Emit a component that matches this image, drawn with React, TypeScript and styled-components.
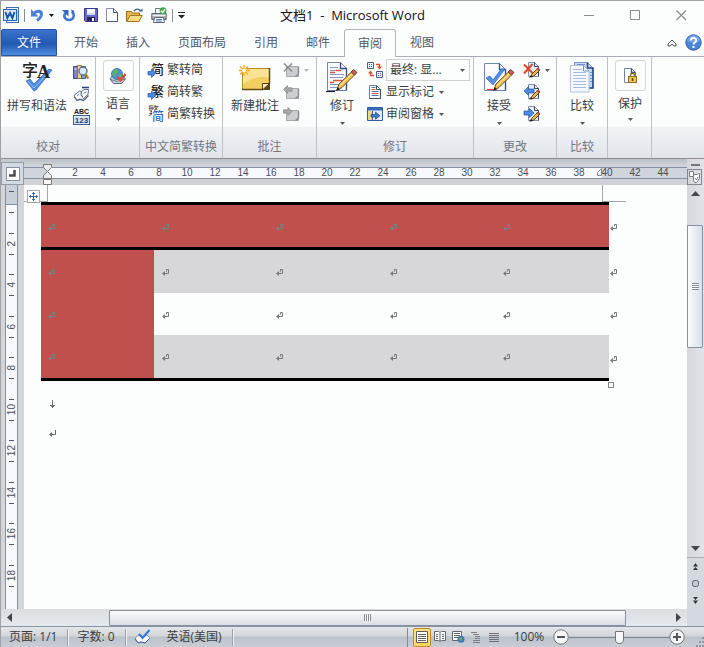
import React from "react";
import styled, { createGlobalStyle, css } from "styled-components";

const GlobalStyle = createGlobalStyle`
  *, *::before, *::after { box-sizing: border-box; }
  body { margin: 0; background: #fcfdfd; }
  body, button, select, input {
    font-family: "Open Sans", "Noto Sans CJK SC", sans-serif;
    font-size: 12px;
    line-height: 16px;
    color: #3a3d42;
  }
  button { margin: 0; padding: 0; border: 0; background: none; cursor: pointer; }
  svg { display: block; flex: none; overflow: visible; }
`;

/* ---------- icons ---------- */

const WordLogo = () => (
  <svg width="16" height="16" viewBox="0 0 16 16">
    <rect x="3.500" y=".5" width="12" height="15" fill="#f4f8fd" stroke="#3b6fb4" />
    <path d="M13 4h2M13 6h2M13 8h2M13 10h2M13 12h2" stroke="#7ea6d8" />
    <rect x=".5" y="2.500" width="13" height="11" fill="#d8e8f8" stroke="#2c62ac" />
    <path d="M2.500 5l1.900 6L7 6l2.400 5 2.100-6" fill="none" stroke="#1b55a5" strokeWidth="2" />
  </svg>
);
const UndoIcon = () => (
  <svg width="14" height="14" viewBox="0 0 14 14">
    <path d="M4 5.500C7 1.500 12.300 3 11.300 7.500 10.800 9.500 9 11.300 7 12.500" fill="none" stroke="#4a80d2" strokeWidth="3" />
    <path d="M1 1v7.500h7.500z" fill="#4b82d6" />
  </svg>
);
const RedoIcon = () => (
  <svg width="14" height="14" viewBox="0 0 14 14">
    <path d="M3.500 5C.5 9 4 12 7 12c4.500 0 6.300-5 3-8.500" fill="none" stroke="#3f78ce" strokeWidth="2.600" />
    <path d="M0 2h6.500v6.500z" fill="#3468bd" />
    <path d="M9 1.500l3.500 1.500-2 2.500z" fill="#3468bd" />
  </svg>
);
const SaveIcon = () => (
  <svg width="14" height="14" viewBox="0 0 14 14">
    <path d="M.5.5h13v13h-12l-1-1z" fill="#6968c8" stroke="#37358e" />
    <rect x="3" y="1" width="8" height="6" fill="#f4f6fd" />
    <path d="M3 6h8" stroke="#b7bee8" />
    <rect x="3" y="9" width="8" height="4" fill="#28264f" />
    <rect x="8" y="10" width="2" height="3" fill="#fff" />
  </svg>
);
const NewDocIcon = () => (
  <svg width="12" height="14" viewBox="0 0 12 14">
    <path d="M.5.500h7l4 4v9H.500z" fill="#fcfdff" stroke="#8592a7" />
    <path d="M7.500.500v4h4v9H.500" fill="none" stroke="#49597a" />
  </svg>
);
const OpenIcon = () => (
  <svg width="17" height="14" viewBox="0 0 17 14">
    <path d="M.5 13V3.500h5l1 1.500h7v8z" fill="#e8b64a" stroke="#9b6b18" />
    <path d="M.8 13.500 4 7.500h12.300l-3.300 6z" fill="#fbdc80" stroke="#a87620" />
    <path d="M8 3c2-2.500 5-2.500 6.500 0" fill="none" stroke="#3f628e" strokeWidth="1.300" />
    <path d="M12.500 3.500h4v-3z" fill="#3f628e" />
  </svg>
);
const PrintIcon = () => (
  <svg width="16" height="16" viewBox="0 0 16 16">
    <path d="M4.500 6V1.500h7V6" fill="#fff" stroke="#6f7988" />
    <path d="M.8 6.500h14.400v6H.8z" fill="#a4a9b2" stroke="#5f6670" />
    <path d="M1.500 8.500h13" stroke="#f1f3f6" strokeWidth="1.500" />
    <path d="M3.500 10.500h9l1 5h-11z" fill="#fff" stroke="#596170" />
    <path d="M5 12.500h6M5 14h6" stroke="#4f80c0" />
    <circle cx="12" cy="3.800" r="3.500" fill="#4fa851" />
    <path d="M10 3.800l1.500 1.700L14 2.300" fill="none" stroke="#fff" strokeWidth="1.300" />
  </svg>
);
const CustomizeIcon = () => (
  <svg width="8" height="8" viewBox="0 0 8 8">
    <path d="M0 1.500h7" stroke="#222" />
    <path d="M0 4h7L3.500 7.500z" fill="#222" />
  </svg>
);
const Caret = ({ color = "#555a61" }: { color?: string }) => (
  <svg width="5" height="3" viewBox="0 0 5 3"><path d="M0 0h5L2.500 3z" fill={color} /></svg>
);
const MinimizeIcon = () => (
  <svg width="11" height="11" viewBox="0 0 11 11"><path d="M0 5.500h10" stroke="#8b8b8b" /></svg>
);
const MaximizeIcon = () => (
  <svg width="11" height="11" viewBox="0 0 11 11"><path d="M.5.500h9v9h-9z" fill="none" stroke="#8b8b8b" /></svg>
);
const CloseIcon = () => (
  <svg width="11" height="11" viewBox="0 0 11 11"><path d="M.5.500l9.500 9.500M10 .5L.5 10" stroke="#8b8b8b" strokeWidth="1.200" /></svg>
);
const CollapseIcon = () => (
  <svg width="10" height="8" viewBox="0 0 10 8">
    <path d="M5 1L9 5v2H7L5 5.200 3 7H1V5z" fill="#fff" stroke="#4f535a" />
  </svg>
);
const HelpIcon = () => (
  <svg width="17" height="17" viewBox="0 0 17 17">
    <circle cx="8.500" cy="8.500" r="7.700" fill="#4b86d6" stroke="#2a5fae" />
    <path d="M2 7a6.500 6 0 0 1 13 0c-4 2-9 2-13 0z" fill="#86b2ea" opacity=".6" />
    <path d="M5.800 6.500c0-3.600 5.600-3.400 5.400 0C11.200 8.300 8.500 8.400 8.500 10.600" fill="none" stroke="#fff" strokeWidth="2" />
    <rect x="7.500" y="12" width="2" height="2" fill="#fff" />
  </svg>
);
const SpellingIcon = () => (
  <svg width="32" height="32" viewBox="0 0 32 32">
    <path d="M5 19l4-2 4 5L28 7l3 1-16 20-2 1z" fill="#4f8be0" stroke="#2f63b8" strokeWidth=".7" />
    <path d="M7 19l6 7L27 11" fill="none" stroke="#9cc2f4" />
    <text x="1" y="14" fontSize="16" fontWeight="500" fontFamily='"Noto Sans CJK SC"' fill="#222">字</text>
    <text x="16" y="16" fontSize="18" fontWeight="700" fontFamily='"Liberation Serif"' fill="#222">A</text>
  </svg>
);
const ResearchIcon = () => (
  <svg width="16" height="16" viewBox="0 0 16 16">
    <path d="M.5 2.500h4v12h-4z" fill="#8583c6" stroke="#45438b" />
    <path d="M4.500 1.500h4v13h-4z" fill="#e9d37c" stroke="#8f7631" />
    <path d="M8.500 2.500h4v12h-4z" fill="#7fa3d6" stroke="#3a5b8c" />
    <path d="M1.500 5h2M5.500 4h2M9.500 5h2" stroke="#fff" />
    <circle cx="10" cy="7" r="4" fill="#d7ecfb" stroke="#5c6b80" strokeWidth="1.300" />
    <path d="M12.500 10l2.700 4.500" stroke="#b47a25" strokeWidth="2.400" />
  </svg>
);
const ThesaurusIcon = () => (
  <svg width="16" height="16" viewBox="0 0 16 16">
    <path d="M1 9.500L6.500 5l2 .5L11 3.500h4.500L15 8.500 9.500 13.500l-3-.5L4 14.500z" fill="#fff" stroke="#5e6c83" />
    <path d="M8.500 5.500l-.5 3 2 3M1 10.500l3 4 3-1 3.500 1L15.500 9.500" fill="none" stroke="#5e6c83" strokeWidth="1.200" />
    <path d="M9 1.500h7" stroke="#2c4488" strokeWidth="1.600" />
    <path d="M10.500 7l3-1M4 10l2.500-2" stroke="#5b86c9" />
  </svg>
);
const WordCountIcon = () => (
  <svg width="17" height="17" viewBox="0 0 17 17">
    <text x="8.500" y="6" textAnchor="middle" fontSize="7" fontWeight="700" fontFamily='"Liberation Sans"' fill="#222">ABC</text>
    <rect x=".5" y="7.500" width="16" height="9" fill="#d9e6f8" stroke="#44608f" />
    <text x="8.500" y="15" textAnchor="middle" fontSize="8" fontWeight="700" fontFamily='"Liberation Sans"' fill="#23406f">123</text>
  </svg>
);
const LanguageIcon = () => (
  <svg width="18" height="18" viewBox="0 0 18 18">
    <path d="M1 12l3-4h9l3.500 4-4 4.500h-8z" fill="#cfd6e0" stroke="#56657d" />
    <path d="M1.500 12.500L8 14.500l8-2.500" fill="none" stroke="#69788f" />
    <circle cx="8" cy="7" r="5.500" fill="#4d8ed8" stroke="#366aa8" strokeWidth=".8" />
    <path d="M4 3.500L7.500 2l2 2-2 2.500-2 3-2.500-2zM10 8l3-2v3l-2.500 2.500z" fill="#5cb462" />
    <path d="M8.500 10l3 3.500L16.500 7" fill="none" stroke="#e04a28" strokeWidth="2.200" />
  </svg>
);
const BlueArrow = () => <path d="M0 9.500h3.500V7L8 11.200l-4.500 4.300V13H0z" fill="#4d8ae4" stroke="#2559ac" strokeWidth=".7" />;
const ConvertIcon = ({ glyph }: { glyph: string }) => (
  <svg width="16" height="16" viewBox="0 0 16 16">
    <text x="3" y="12" fontSize="13" fontWeight="500" fontFamily='"Noto Sans CJK SC"' fill="#222">{glyph}</text>
    <BlueArrow />
  </svg>
);
const ConvertBothIcon = () => (
  <svg width="16" height="16" viewBox="0 0 16 16">
    <text x="0" y="9" fontSize="11" fontFamily='"Noto Sans CJK SC"' fill="#444">繁</text>
    <rect x="4" y="4" width="12" height="12" fill="#fcfdfd" />
    <text x="4" y="15" fontSize="12" fontWeight="500" fontFamily='"Noto Sans CJK SC"' fill="#2d66bd">简</text>
  </svg>
);
const NewCommentIcon = () => (
  <svg width="32" height="32" viewBox="0 0 32 32">
    <path d="M3.500 6.500h27v21h-27z" fill="#f2cf62" stroke="#b08a2e" />
    <path d="M4 7h26v9C20 13 12 17 4 22z" fill="#f9e396" />
    <path d="M30.500 6v15l-7 6.500H3" fill="none" stroke="#5f4b17" strokeWidth="1.500" />
    <path d="M23.500 28v-6.500h7z" fill="#fbf0b7" stroke="#4b3c17" />
    <path d="M24 28l7-6.500V28z" fill="#574717" />
    <path d="M5 3v11M0 8.500h11M1 4.500l8 8M9 4.500l-8 8" stroke="#f3a91f" strokeWidth="1.300" />
    <circle cx="5" cy="8.500" r="2" fill="#fffce0" />
  </svg>
);
const GrayNoteIcon = ({ kind }: { kind: "delete" | "prev" | "next" }) => (
  <svg width="16" height="16" viewBox="0 0 16 16">
    <path d="M3.500 4.500h12v10h-12z" fill="#cccdd1" stroke="#a6a8ac" />
    <path d="M15.500 5v7l-3 2.500" fill="none" stroke="#85888d" strokeWidth="1.300" />
    {kind === "delete" && <path d="M1 1.500l8 8M9 1.500l-8 8" stroke="#8d9096" strokeWidth="1.700" />}
    {kind === "prev" && <path d="M.5 5.500l4-4v2.300h4.500v3.400H4.500v2.300z" fill="#a5a7ab" stroke="#85888d" strokeWidth=".7" />}
    {kind === "next" && <path d="M9 5.500l-4-4v2.300H.5v3.400H5v2.300z" fill="#a5a7ab" stroke="#85888d" strokeWidth=".7" />}
  </svg>
);
const Pencil = () => (
  <>
    <path d="M11 28l2-6L26 9.500l3 3L16 25.500z" fill="#f1bf55" stroke="#6e4a1b" />
    <path d="M14 23.500L27 11" stroke="#fff0ac" />
    <path d="M25 10l2.500-2.500 3.500 3-2.500 2.500z" fill="#c95c55" stroke="#743c35" />
    <path d="M10 29l1.500-4 2.500 2.500z" fill="#222" />
  </>
);
const TrackIcon = () => (
  <svg width="32" height="32" viewBox="0 0 32 32">
    <path d="M1.500.5h13l6 6v22h-19z" fill="#fbfcff" stroke="#7187ae" />
    <path d="M14.500.5v6h6v22" fill="none" stroke="#334d7d" strokeWidth="1.300" />
    <path d="M4 5.500h8M4 8.500h8M4 12.500h14M4 15.500h13M4 22.500h9M4 25.500h8" stroke="#8399bf" />
    <path d="M10 8.500h5M4 10.500h5M7 18.500h9M4 20.500h4" stroke="#df5138" strokeWidth="1.500" />
    <Pencil />
    <path d="M0 29.500h9" stroke="#222" strokeWidth="1.200" />
  </svg>
);
const DisplayReviewIcon = () => (
  <svg width="16" height="16" viewBox="0 0 16 16">
    <path d="M.5.500h6v6h-6zM9.500 9.500h6v6h-6z" fill="#edf3fb" stroke="#4d5c7b" />
    <path d="M2 2.500h1M4 2.500h1M2 4.500h1M4 4.500h1M11 11.500h1M13 11.500h1M11 13.500h1M13 13.500h1" stroke="#365e9f" />
    <path d="M9 2.500h3.500V5M7 13.500H3.500V11" fill="none" stroke="#df4f2b" strokeWidth="1.300" />
    <path d="M10 4.500h5l-2.500 3zM1 11.500h5L3.500 8.500z" fill="#df4f2b" />
  </svg>
);
const ShowMarkupIcon = () => (
  <svg width="16" height="16" viewBox="0 0 16 16">
    <path d="M2.500 1.500h7l4 4v9h-11z" fill="#fbfcff" stroke="#6e7e99" />
    <path d="M9.500 1.500v4h4v9h-11" fill="none" stroke="#3d4c69" />
    <path d="M4.500 5.500h4M4.500 9.500h7" stroke="#df5138" />
    <path d="M4.500 3.500h4M4.500 7.500h7M4.500 11.500h7" stroke="#5476af" />
  </svg>
);
const ReviewPaneIcon = () => (
  <svg width="16" height="16" viewBox="0 0 16 16">
    <path d="M.5 1.500h15v13H.500z" fill="#e4edf9" stroke="#345f9f" />
    <path d="M1 3h14" stroke="#366db9" strokeWidth="3" />
    <path d="M1 5h4v9H1z" fill="#ead891" />
    <path d="M5.500 5v9" stroke="#405f8e" />
    <path d="M4 8.500h4.500V6L13 9.700 8.500 13.300V11H4z" fill="#3f7bd3" stroke="#1e4b8e" strokeWidth=".7" />
  </svg>
);
const AcceptIcon = () => (
  <svg width="32" height="32" viewBox="0 0 32 32">
    <path d="M1.500 1.500h15l6 6v21h-21z" fill="#fbfcff" stroke="#7187ae" />
    <path d="M16.500 1.500v6h6v21" fill="none" stroke="#334d7d" strokeWidth="1.300" />
    <path d="M3 16l4-2 3 4L18 7h4L10 23z" fill="#568fe4" stroke="#3165bd" strokeWidth=".7" />
    <Pencil />
    <path d="M4 27.500h7" stroke="#db4938" strokeWidth="1.200" />
  </svg>
);
const ChangeIcon = ({ kind }: { kind: "reject" | "prev" | "next" }) => (
  <svg width="16" height="16" viewBox="0 0 16 16">
    <path d="M4.500.500h6l4 4v10h-10z" fill="#e9eff9" stroke="#8292ae" />
    <path d="M10.500.500v4h4v10" fill="none" stroke="#304567" />
    <path d="M7 15l1-3 6-6 2 2-6 6z" fill="#edb849" stroke="#4e391d" strokeWidth=".9" />
    <path d="M12.500 6.500l2-1 1.500 2-1.500 1.500z" fill="#b34a45" />
    <path d="M5 15.500l4-.500-2-2z" fill="#222" />
    {kind === "reject" && <path d="M0 2.500L8.500 11M8.500 2L0 11.500" stroke="#e44325" strokeWidth="2" />}
    {kind === "prev" && <path d="M0 7l4.500-4.500V5H10v4H4.500v2.500z" fill="#4d8ae4" stroke="#2253a3" strokeWidth=".7" />}
    {kind === "next" && <path d="M10 7L5.500 2.500V5H0v4h5.500v2.500z" fill="#4d8ae4" stroke="#2253a3" strokeWidth=".7" />}
  </svg>
);
const CompareIcon = () => (
  <svg width="26" height="32" viewBox="0 0 26 32">
    <path d="M5.500.5h13l5.500 5.500v20H5.500z" fill="#c6d9f2" stroke="#7a97c2" />
    <path d="M18.500.5v5.500h5.500v20h-4" fill="none" stroke="#294d84" strokeWidth="1.600" />
    <path d="M1.500 3.500h13l5.500 5.500v21H1.500z" fill="#f5f9ff" stroke="#b3c3dc" />
    <path d="M14.500 3.500v5.500h5.500" fill="none" stroke="#7590b8" />
    <path d="M4 7.500h9M4 10.500h13M4 13.500h13M4 16.500h13M4 19.500h13M4 22.500h13M4 25.500h13" stroke="#a5bfe4" />
    <path d="M8 2.500h8M21 10.500h2M21 13.500h2M21 16.500h2M21 19.500h2" stroke="#6f95cc" />
  </svg>
);
const ProtectIcon = () => (
  <svg width="16" height="18" viewBox="0 0 16 18">
    <path d="M2.500 1.500h7l4 4v10h-11z" fill="#fafcff" stroke="#7286a5" />
    <path d="M9.500 1.500v4h4" fill="none" stroke="#344c75" strokeWidth="1.300" />
    <path d="M8.500 10V8.500c0-3 4-3 4 0V10" fill="none" stroke="#8e7129" strokeWidth="1.300" />
    <rect x="6.500" y="9.500" width="8" height="6" fill="#efc65a" stroke="#916b20" />
    <path d="M10.500 11v3" stroke="#5b4315" strokeWidth="1.500" />
  </svg>
);
const ReturnMark = ({ color = "#77777c" }: { color?: string }) => (
  <svg width="7" height="7" viewBox="0 0 7 7">
    <path d="M3 4.500h3.500v-4h-2v2" fill="none" stroke={color} />
    <path d="M0 4.500L3 2v5z" fill={color} />
  </svg>
);
const ParagraphMark = () => (
  <svg width="7" height="7" viewBox="0 0 7 7">
    <path d="M6.500 0v4.500H2" fill="none" stroke="#66666c" />
    <path d="M0 4.500L3 2v5z" fill="#66666c" />
  </svg>
);
const LineBreakMark = () => (
  <svg width="7" height="9" viewBox="0 0 7 9">
    <path d="M3.500 0v8M1 5.500h5M2 6.500h3" fill="none" stroke="#66707a" />
  </svg>
);
const MoveIcon = () => (
  <svg width="9" height="9" viewBox="0 0 9 9">
    <path d="M4.500 0v9M0 4.500h9M3 1.500h3M3 7.500h3M1.500 3v3M7.500 3v3" stroke="#3a68b5" />
  </svg>
);
const IndentMarker = () => (
  <svg width="9" height="21" viewBox="0 0 9 21">
    <path d="M.5.500h8v3l-4 4-4-4zM.5 14.500v-3l4-4 4 4v3z" fill="#ececef" stroke="#77797e" />
    <path d="M.5 15.500h8v5h-8z" fill="#f8f8fa" stroke="#77797e" />
  </svg>
);
const RightIndent = () => (
  <svg width="9" height="8" viewBox="0 0 9 8">
    <path d="M.5 7.500v-3l4-4v7z" fill="#f0f1f4" stroke="#87898e" />
  </svg>
);
const TabStopIcon = () => (
  <svg width="7" height="7" viewBox="0 0 7 7"><path d="M0 5.500h5.500V0" fill="none" stroke="#4b4b50" strokeWidth="2.500" /></svg>
);
const RulerToggleIcon = () => (
  <svg width="11" height="12" viewBox="0 0 11 12">
    <path d="M.5.5h4v3h4l1-1h1v5l-3 4h-2l-1-2v-4h-4z" fill="#fff" stroke="#777b82" />
    <path d="M6 7l1.500 2L9 6M4.500 3.500v2" fill="none" stroke="#777b82" />
  </svg>
);
const ArrowIcon = ({ dir }: { dir: "up" | "down" | "left" | "right" }) => {
  const paths = { up: "M0 7l4.500-5L9 7z", down: "M0 2h9L4.500 7z", left: "M7 0L2 4.500 7 9z", right: "M2 0l5 4.500L2 9z" };
  return <svg width="9" height="9" viewBox="0 0 9 9"><path d={paths[dir]} fill="#43454b" /></svg>;
};
const PageJumpIcon = ({ down = false }: { down?: boolean }) => (
  <svg width="5" height="7" viewBox="0 0 5 7">
    {down ? <path d="M0 0h5L2.500 3zM0 3.500h5L2.500 7z" fill="#333" /> : <path d="M0 3.500h5L2.500 0zM0 7h5L2.500 4z" fill="#333" />}
  </svg>
);
const BrowseIcon = () => (
  <svg width="7" height="7" viewBox="0 0 7 7"><rect x=".5" y=".5" width="6" height="6" rx="2" fill="#c3ccd4" stroke="#5b6068" /></svg>
);
const ProofIcon = () => (
  <svg width="17" height="16" viewBox="0 0 17 16">
    <path d="M1 9l4-3 4 2 4-2 3 3-5 5-4-1-3 1z" fill="#f4f6fb" stroke="#8092b8" />
    <path d="M1 10l3 4 3-1 4 1 4-4" fill="none" stroke="#4a639a" />
    <path d="M5 5l3.500 4L15.500 1" fill="none" stroke="#3977d4" strokeWidth="2" />
  </svg>
);
const PrintViewIcon = () => (
  <svg width="12" height="12" viewBox="0 0 12 12">
    <path d="M.5.500h11v11H.500z" fill="#fff" stroke="#625d50" />
    <path d="M2 3.500h8M2 5.500h8M2 7.500h8M2 9.500h8" stroke="#6b675d" />
  </svg>
);
const ReadViewIcon = () => (
  <svg width="12" height="12" viewBox="0 0 12 12">
    <path d="M.5.5h4l1.500 1 1.500-1h4v9h-4l-1.500 1-1.500-1h-4z" fill="#fafbfd" stroke="#65696f" />
    <path d="M6 2v9M2 3.500h2M2 5.500h2M2 7.500h2M8 3.500h2M8 5.500h2M8 7.500h2" stroke="#65696f" />
  </svg>
);
const WebViewIcon = () => (
  <svg width="13" height="12" viewBox="0 0 13 12">
    <path d="M.5.500h9v9h-9z" fill="#fff" stroke="#64686e" />
    <path d="M2 2.500h6M2 4.500h6M2 6.500h4" stroke="#64686e" />
    <circle cx="9" cy="8.300" r="3.500" fill="#3f79bd" />
    <path d="M7 7l3-1v3l-2 1z" fill="#66ad61" />
  </svg>
);
const OutlineViewIcon = () => (
  <svg width="10" height="11" viewBox="0 0 10 11">
    <path d="M0 .5h6M2 2.500h6M4 4.500h5M4 6.500h5M2 8.500h7M2 10.500h7" stroke="#7c8086" />
  </svg>
);
const DraftViewIcon = () => (
  <svg width="10" height="11" viewBox="0 0 10 11">
    <path d="M0 1.500h10M0 3.500h10M0 5.500h10M0 7.500h10M0 9.500h10" stroke="#6f7379" />
  </svg>
);
const ZoomSignIcon = ({ plus = false }: { plus?: boolean }) => (
  <svg width="16" height="16" viewBox="0 0 16 16">
    <circle cx="8" cy="8" r="7.200" fill="#f7f8fa" stroke="#74787f" />
    <path d={plus ? "M4 8h8M8 4v8" : "M4 8h8"} stroke="#52565d" strokeWidth="2" />
  </svg>
);
const SizeGripIcon = () => (
  <svg width="9" height="10" viewBox="0 0 9 10">
    <path d="M7 0h2v2H7zM4 4h2v2H4zM7 4h2v2H7zM1 8h2v2H1zM4 8h2v2H4zM7 8h2v2H7z" fill="#8f969e" />
  </svg>
);

/* ---------- window frame ---------- */

const Window = styled.div`
  display: flex;
  flex-direction: column;
  height: 100vh;
  min-height: 480px;
  overflow: hidden;
  border-top: 1px solid #a3a3a4;
  border-left: 1px solid #9fa1a4;
`;
const TitleBar = styled.header`
  display: grid;
  grid-template-columns: 1fr auto 1fr;
  align-items: center;
  flex: none;
  height: 28px;
`;
const QuickAccess = styled.div`
  display: flex;
  align-items: center;
  gap: 8px;
  padding-left: 2px;
`;
const IconButton = styled.button`
  display: flex;
  align-items: center;
  justify-content: center;
  gap: 5px;
`;
const Rule = styled.span`
  width: 1px;
  height: 13px;
  margin: 0 -3px;
  background: #8d8f93;
`;
const Title = styled.h1`
  margin: 0;
  font-size: 13px;
  font-weight: 400;
  color: #111;
  white-space: pre;
`;
const WindowControls = styled.div`
  display: flex;
  justify-content: flex-end;
  gap: 35px;
  padding-right: 17px;
`;

/* ---------- ribbon ---------- */

const TabBar = styled.nav`
  display: flex;
  align-items: flex-end;
  flex: none;
  height: 28px;
  border-bottom: 1px solid #a9adb8;
`;
const FileTab = styled.button`
  width: 56px;
  height: 27px;
  margin-right: 3px;
  border: 1px solid #2653a2;
  border-radius: 2px 2px 0 0;
  background: linear-gradient(#3a74ce, #2558b0 55%, #4b8ce0);
  color: #fff;
`;
const Tab = styled.button<{ $active?: boolean }>`
  height: 27px;
  padding: 0 13px;
  border: 1px solid transparent;
  border-bottom: 0;
  color: #55585e;
  ${(p) => p.$active && css`
    height: 28px;
    margin-bottom: -1px;
    border-color: #b2b5bd;
    border-radius: 3px 3px 0 0;
    background: #fcfdfd;
  `}
`;
const TabTools = styled.div`
  display: flex;
  align-items: center;
  align-self: center;
  gap: 8px;
  margin-left: auto;
  padding-right: 2px;
`;
const Ribbon = styled.div`
  display: flex;
  flex: none;
  height: 102px;
  background: linear-gradient(#fcfdfd 69px, #f1f4f7 70px, #e0e5eb);
  border-bottom: 1px solid #8f8b90;
`;
const Group = styled.section<{ $width: number }>`
  display: flex;
  flex: none;
  flex-direction: column;
  width: ${(p) => p.$width}px;
  border-right: 1px solid #bcc0c7;
`;
const GroupBody = styled.div<{ $pad?: number }>`
  display: flex;
  flex: 1;
  align-items: flex-start;
  padding: 2px 0 0 ${(p) => p.$pad ?? 0}px;
`;
const GroupName = styled.h2`
  height: 21px;
  margin: 0;
  font-size: 12px;
  font-weight: 400;
  line-height: 20px;
  text-align: center;
  white-space: nowrap;
  color: #73777f;
`;
const BigButton = styled.button<{ $width: number }>`
  display: flex;
  flex-direction: column;
  align-items: center;
  width: ${(p) => p.$width}px;
  padding-top: 3px;
  white-space: nowrap;
  & > span { margin: 4px 0 8px; }
`;
const BoxedButton = styled(BigButton)`
  padding: 1px 0 0 1px;
  & > span { margin: 5px 0 6px; }
`;
const IconBox = styled.i`
  display: grid;
  place-items: center;
  width: 31px;
  height: 31px;
  border: 1px solid #d3d4d8;
  border-radius: 3px;
`;
const Stack = styled.div`
  display: flex;
  flex-direction: column;
`;
const SmallButton = styled.button`
  display: flex;
  align-items: center;
  gap: 3px;
  height: 22px;
  white-space: nowrap;
  & > svg:last-child:not(:first-child) { margin-left: 2px; }
`;
const SelectRow = styled.label`
  display: flex;
  align-items: center;
  gap: 3px;
  height: 22px;
`;
const SelectFrame = styled.span`
  display: grid;
  align-items: center;
  width: 84px;
  height: 22px;
  border: 1px solid #cfd1d6;
  & > * { grid-area: 1 / 1; }
  & > svg { justify-self: end; margin-right: 4px; pointer-events: none; }
`;
const Select = styled.select`
  width: 100%;
  height: 20px;
  padding: 0 0 0 3px;
  border: 0;
  appearance: none;
  background: transparent;
`;

/* ---------- rulers ---------- */

const Workspace = styled.div`
  display: grid;
  flex: 1;
  grid-template: 26px minmax(0, 1fr) 17px / 23px minmax(0, 1fr) 17px;
  min-height: 0;
  background: #d3d5d8;
`;
const CornerCell = styled.div`
  display: flex;
  align-items: flex-end;
  padding-top: 3px;
  background: #c4cad0;
`;
const TabStopButton = styled.button`
  display: grid;
  place-items: center;
  width: 23px;
  height: 23px;
  border: 1px solid #939ca7;
  background: #d3dae1;
  & > i {
    display: grid;
    place-items: center;
    width: 14px;
    height: 14px;
    border: 1px solid #87919e;
    background: #fff;
  }
`;
const TopRuler = styled.div`
  position: relative;
  display: flex;
  flex-direction: column;
  padding-top: 8px;
  background: linear-gradient(#b7bec6, #cfd2d6 6px);
`;
const TopScale = styled.div`
  display: flex;
  height: 12px;
  border: solid #8490a0;
  border-width: 1px 0;
  background: linear-gradient(90deg, #d0d5db 23px, #f7f9fc 23px, #f7f9fc calc(100% - 85px), #d0d5db calc(100% - 85px));
`;
const TopNumbers = styled.ol`
  display: flex;
  margin: 0;
  padding: 0 0 0 37px;
  list-style: none;
`;
const TopNumber = styled.li`
  display: flex;
  flex: none;
  flex-direction: column;
  align-items: center;
  gap: 3px;
  width: 28px;
  font: 10px/10px "Liberation Sans", sans-serif;
  color: #4b4e54;
  &::after { content: ""; width: 1px; height: 3px; background: #55585e; }
`;
const IndentSlot = styled.span<{ $right?: boolean }>`
  position: absolute;
  ${(p) => p.$right ? "right: 81px; top: 9px;" : "left: 19px; top: 5px;"}
`;
const SideRuler = styled.div`
  display: flex;
  justify-content: center;
  overflow: hidden;
  padding-right: 2px;
`;
const SideScale = styled.ol`
  width: 13px;
  margin: 0;
  padding: 6px 0 0;
  list-style: none;
  border: solid #8490a0;
  border-width: 0 1px;
  background: linear-gradient(#c9d0d8 19px, #8490a0 19px, #8490a0 20px, #f7f9fc 20px);
`;
const SideTick = styled.li`
  width: 5px;
  height: 21px;
  margin: 0 auto;
  border-top: 1px solid #55585e;
`;
const SideNumber = styled.li`
  display: flex;
  flex-direction: column;
  align-items: center;
  justify-content: space-between;
  height: 22px;
  margin-bottom: 19px;
  font: 10px/10px "Liberation Sans", sans-serif;
  color: #4b4e54;
  &:nth-child(even) { margin-bottom: 20px; }
  &::before, &::after { content: ""; width: 5px; height: 1px; background: #55585e; }
  & > span { writing-mode: vertical-rl; transform: rotate(180deg); }
`;

/* ---------- document ---------- */

const Page = styled.main`
  overflow: hidden;
  background: #fcfdfd;
`;
const MarginRow = styled.div`
  position: relative;
  display: flex;
  justify-content: space-between;
  height: 17px;
  padding-right: 61px;
`;
const Crop = styled.span<{ $right?: boolean }>`
  width: 24px;
  border-bottom: 1px solid #a6a6a8;
  ${(p) => p.$right ? "border-left" : "border-right"}: 1px solid #a6a6a8;
`;
const MoveHandle = styled.button`
  position: absolute;
  left: 3px;
  top: 5px;
  display: grid;
  place-items: center;
  width: 13px;
  height: 13px;
  border: 1px solid #a6a8ac;
  background: #fff;
`;
const TableWrap = styled.div`
  position: relative;
  padding: 0 61px 0 17px;
`;
const DocTable = styled.table`
  width: 100%;
  table-layout: fixed;
  border-collapse: separate;
  border-spacing: 0;
`;
const Col = styled.col<{ $width?: number }>`
  width: ${(p) => (p.$width ? `${p.$width}px` : "auto")};
`;
const Row = styled.tr<{ $height: number }>`
  height: ${(p) => p.$height}px;
`;
const Cell = styled.td<{ $fill: string; $top?: boolean; $bottom?: boolean }>`
  padding: 2px 0 0 8px;
  vertical-align: middle;
  background: ${(p) => p.$fill};
  border: solid #000;
  border-width: ${(p) => (p.$top ? 3 : 0)}px 0 ${(p) => (p.$bottom ? 3 : 0)}px;
  &:first-child { padding-left: 7px; }
`;
const EndCell = styled.td`
  padding: 2px 0 0 1px;
  vertical-align: middle;
`;
const ResizeHandle = styled.button`
  position: absolute;
  right: 73px;
  top: calc(100% + 1px);
  width: 6px;
  height: 6px;
  border: 1px solid #85858e;
`;
const Paragraph = styled.p<{ $gap: number }>`
  margin: 0;
  padding: ${(p) => p.$gap}px 0 0 25px;
`;

/* ---------- scroll bars ---------- */

const SideBar = styled.div`
  grid-row: 1 / 4;
  grid-column: 3;
  display: flex;
  flex-direction: column;
  align-items: stretch;
  background: linear-gradient(90deg, #d4d8dd, #dfe4ea);
`;
const SplitHandle = styled.span`
  align-self: center;
  width: 9px;
  height: 2px;
  margin: 5px 0 3px;
  background: #74777c;
`;
const RulerToggle = styled(IconButton)`
  width: 15px;
  height: 16px;
  border: 1px solid #83878e;
`;
const VLane = styled.div`
  flex: 1;
  padding-top: 23px;
`;
const Thumb = styled.div<{ $vertical?: boolean }>`
  display: flex;
  align-items: center;
  justify-content: center;
  border: 1px solid #88919d;
  border-radius: 1px;
  background: ${(p) => p.$vertical ? "linear-gradient(90deg, #fafbfd, #d7e0ea)" : "linear-gradient(#fafbfd, #d9dee5)"};
  ${(p) => p.$vertical ? "height: 39%; width: 16px;" : "flex: 1; height: 16px;"}
`;
const Grip = styled.i<{ $vertical?: boolean }>`
  width: 7px;
  height: 7px;
  background: repeating-linear-gradient(${(p) => (p.$vertical ? "180deg" : "90deg")}, #858b94 0 1px, #fff 1px 2px);
`;
const ScrollButton = styled(IconButton)`
  height: 17px;
`;
const JumpButtons = styled.div`
  display: flex;
  flex-direction: column;
  height: 69px;
  border-top: 1px solid #abaeb4;
  background: #d3d9df;
  & > button { height: 17px; }
`;
const BottomBar = styled.div`
  grid-column: 1 / 3;
  grid-row: 3;
  display: flex;
  align-items: center;
  padding-right: 1px;
  background: linear-gradient(#dadee2, #e4e9ef);
  & > button { width: 16px; height: 17px; }
`;
const HLane = styled.div`
  display: flex;
  flex: 1;
  padding: 0 44px 0 92px;
`;

/* ---------- status bar ---------- */

const StatusBar = styled.footer`
  display: flex;
  align-items: center;
  flex: none;
  height: 21px;
  border-top: 1px solid #8794a2;
  background: linear-gradient(#e4e7ea, #d2d5d9 9px, #bbc2c9 10px, #c9ced4);
`;
const StatusItem = styled.button`
  display: flex;
  align-items: center;
  height: 17px;
  padding: 0 10px 0 9px;
  border-right: 1px solid #9ca2a9;
  box-shadow: 1px 0 #f0f1f3;
  white-space: nowrap;
  &:first-child { padding-left: 8px; }
`;
const LanguageItem = styled(StatusItem)`
  padding-left: 16px;
`;
const ProofButton = styled(IconButton)`
  padding-left: 8px;
`;
const Views = styled.div`
  display: flex;
  align-items: center;
  margin-left: auto;
  padding-left: 5px;
  border-left: 1px solid #878b90;
`;
const ViewButton = styled(IconButton)<{ $active?: boolean }>`
  width: 18px;
  height: 19px;
  ${(p) => p.$active && css`
    border: 1px solid #c08a2a;
    border-radius: 2px;
    background: linear-gradient(#fde48d, #fbd253);
    box-shadow: inset 0 0 0 1px #ffdf72;
  `}
`;
const ZoomLevel = styled.button`
  width: 34px;
  margin: 0 7px 0 9px;
`;
const ZoomRange = styled.input`
  width: 100px;
  height: 16px;
  margin: 0;
  appearance: none;
  background: linear-gradient(#7a828b, #7a828b) center / 100% 1px no-repeat;
  &::-webkit-slider-thumb {
    appearance: none;
    width: 9px;
    height: 13px;
    border: 1px solid #6f757d;
    border-radius: 1px 1px 5px 5px;
    background: #f6f7f9;
  }
`;
const GripCorner = styled.span`
  align-self: flex-end;
  margin-left: 10px;
`;

const tabs = ["开始", "插入", "页面布局", "引用", "邮件", "审阅", "视图"];
const topNumbers = Array.from({ length: 22 }, (_, i) => (i + 1) * 2);
const sideNumbers = [2, 4, 6, 8, 10, 12, 14, 16, 18];
const red = "#c0504d";
const band = "#d7d7d9";
const plain = "#fcfdfd";
const rows = [
  { height: 48, first: red, rest: red, mark: "#7c8083" },
  { height: 43, first: red, rest: band, mark: "#77777c" },
  { height: 42, first: red, rest: plain, mark: "#77777c" },
  { height: 46, first: red, rest: band, mark: "#77777c" },
];

export default function App() {
  return (
    <Window>
      <GlobalStyle />
      <TitleBar>
        <QuickAccess>
          <WordLogo />
          <Rule />
          <IconButton aria-label="撤消"><UndoIcon /><Caret color="#111" /></IconButton>
          <IconButton aria-label="恢复"><RedoIcon /></IconButton>
          <IconButton aria-label="保存"><SaveIcon /></IconButton>
          <IconButton aria-label="新建"><NewDocIcon /></IconButton>
          <IconButton aria-label="打开"><OpenIcon /></IconButton>
          <IconButton aria-label="打印"><PrintIcon /></IconButton>
          <Rule />
          <IconButton aria-label="自定义"><CustomizeIcon /></IconButton>
        </QuickAccess>
        <Title>{"文档1  -  Microsoft Word"}</Title>
        <WindowControls>
          <IconButton aria-label="最小化"><MinimizeIcon /></IconButton>
          <IconButton aria-label="最大化"><MaximizeIcon /></IconButton>
          <IconButton aria-label="关闭"><CloseIcon /></IconButton>
        </WindowControls>
      </TitleBar>

      <TabBar>
        <FileTab>文件</FileTab>
        {tabs.map((t) => <Tab key={t} $active={t === "审阅"}>{t}</Tab>)}
        <TabTools>
          <IconButton aria-label="折叠功能区"><CollapseIcon /></IconButton>
          <IconButton aria-label="帮助"><HelpIcon /></IconButton>
        </TabTools>
      </TabBar>

      <Ribbon>
        <Group $width={95}>
          <GroupBody $pad={4}>
            <BigButton $width={64}><SpellingIcon /><span>拼写和语法</span></BigButton>
            <GroupBody $pad={4} as={Stack}>
              <SmallButton aria-label="信息检索"><ResearchIcon /></SmallButton>
              <SmallButton aria-label="同义词库"><ThesaurusIcon /></SmallButton>
              <SmallButton aria-label="字数统计"><WordCountIcon /></SmallButton>
            </GroupBody>
          </GroupBody>
          <GroupName>校对</GroupName>
        </Group>
        <Group $width={44}>
          <GroupBody>
            <BoxedButton $width={43}><IconBox><LanguageIcon /></IconBox><span>语言</span><Caret /></BoxedButton>
          </GroupBody>
        </Group>
        <Group $width={83}>
          <GroupBody $pad={8}>
            <Stack>
              <SmallButton><ConvertIcon glyph="简" /><span>繁转简</span></SmallButton>
              <SmallButton><ConvertIcon glyph="繁" /><span>简转繁</span></SmallButton>
              <SmallButton><ConvertBothIcon /><span>简繁转换</span></SmallButton>
            </Stack>
          </GroupBody>
          <GroupName>中文简繁转换</GroupName>
        </Group>
        <Group $width={94}>
          <GroupBody $pad={4}>
            <BigButton $width={56}><NewCommentIcon /><span>新建批注</span></BigButton>
            <Stack>
              <SmallButton aria-label="删除批注"><GrayNoteIcon kind="delete" /><Caret color="#b5b7bb" /></SmallButton>
              <SmallButton aria-label="上一条"><GrayNoteIcon kind="prev" /></SmallButton>
              <SmallButton aria-label="下一条"><GrayNoteIcon kind="next" /></SmallButton>
            </Stack>
          </GroupBody>
          <GroupName>批注</GroupName>
        </Group>
        <Group $width={157}>
          <GroupBody>
            <BigButton $width={50}><TrackIcon /><span>修订</span><Caret /></BigButton>
            <Stack>
              <SelectRow>
                <DisplayReviewIcon />
                <SelectFrame>
                  <Select aria-label="显示以供审阅"><option>最终: 显...</option></Select>
                  <Caret />
                </SelectFrame>
              </SelectRow>
              <SmallButton><ShowMarkupIcon /><span>显示标记</span><Caret /></SmallButton>
              <SmallButton><ReviewPaneIcon /><span>审阅窗格</span><Caret /></SmallButton>
            </Stack>
          </GroupBody>
          <GroupName>修订</GroupName>
        </Group>
        <Group $width={83}>
          <GroupBody>
            <BigButton $width={50}><AcceptIcon /><span>接受</span><Caret /></BigButton>
            <Stack>
              <SmallButton aria-label="拒绝"><ChangeIcon kind="reject" /><Caret /></SmallButton>
              <SmallButton aria-label="上一条修订"><ChangeIcon kind="prev" /></SmallButton>
              <SmallButton aria-label="下一条修订"><ChangeIcon kind="next" /></SmallButton>
            </Stack>
          </GroupBody>
          <GroupName>更改</GroupName>
        </Group>
        <Group $width={51}>
          <GroupBody>
            <BigButton $width={50}><CompareIcon /><span>比较</span><Caret /></BigButton>
          </GroupBody>
          <GroupName>比较</GroupName>
        </Group>
        <Group $width={44}>
          <GroupBody>
            <BoxedButton $width={43}><IconBox><ProtectIcon /></IconBox><span>保护</span><Caret /></BoxedButton>
          </GroupBody>
        </Group>
      </Ribbon>

      <Workspace>
        <CornerCell>
          <TabStopButton aria-label="制表符"><i><TabStopIcon /></i></TabStopButton>
        </CornerCell>
        <TopRuler>
          <TopScale>
            <TopNumbers>{topNumbers.map((n) => <TopNumber key={n}>{n}</TopNumber>)}</TopNumbers>
          </TopScale>
          <IndentSlot><IndentMarker /></IndentSlot>
          <IndentSlot $right><RightIndent /></IndentSlot>
        </TopRuler>
        <SideRuler>
          <SideScale>
            <SideTick />
            <SideTick />
            {sideNumbers.map((n) => <SideNumber key={n}><span>{n}</span></SideNumber>)}
          </SideScale>
        </SideRuler>
        <Page>
          <MarginRow>
            <Crop />
            <Crop $right />
            <MoveHandle aria-label="移动表格"><MoveIcon /></MoveHandle>
          </MarginRow>
          <TableWrap>
            <DocTable>
              <colgroup><Col $width={113} /><Col /><Col /><Col /><Col /><Col $width={17} /></colgroup>
              <tbody>
                {rows.map((r, i) => (
                  <Row key={i} $height={r.height}>
                    {[0, 1, 2, 3, 4].map((c) => (
                      <Cell
                        key={c}
                        $fill={c === 0 ? r.first : r.rest}
                        $top={i === 0}
                        $bottom={i === 0 || i === 3}
                      >
                        <ReturnMark color={c === 0 ? "#7c8083" : r.mark} />
                      </Cell>
                    ))}
                    <EndCell><ReturnMark /></EndCell>
                  </Row>
                ))}
              </tbody>
            </DocTable>
            <ResizeHandle aria-label="调整表格大小" />
          </TableWrap>
          <Paragraph $gap={19}><LineBreakMark /></Paragraph>
          <Paragraph $gap={21}><ParagraphMark /></Paragraph>
        </Page>
        <SideBar>
          <SplitHandle />
          <RulerToggle aria-label="标尺"><RulerToggleIcon /></RulerToggle>
          <ScrollButton aria-label="向上滚动"><ArrowIcon dir="up" /></ScrollButton>
          <VLane><Thumb $vertical><Grip $vertical /></Thumb></VLane>
          <ScrollButton aria-label="向下滚动"><ArrowIcon dir="down" /></ScrollButton>
          <JumpButtons>
            <IconButton aria-label="前一页"><PageJumpIcon /></IconButton>
            <IconButton aria-label="选择浏览对象"><BrowseIcon /></IconButton>
            <IconButton aria-label="下一页"><PageJumpIcon down /></IconButton>
          </JumpButtons>
        </SideBar>
        <BottomBar>
          <IconButton aria-label="向左滚动"><ArrowIcon dir="left" /></IconButton>
          <HLane><Thumb><Grip /></Thumb></HLane>
          <IconButton aria-label="向右滚动"><ArrowIcon dir="right" /></IconButton>
        </BottomBar>
      </Workspace>

      <StatusBar>
        <StatusItem>页面: 1/1</StatusItem>
        <StatusItem>字数: 0</StatusItem>
        <ProofButton aria-label="校对"><ProofIcon /></ProofButton>
        <LanguageItem>英语(美国)</LanguageItem>
        <Views>
          <ViewButton $active aria-label="页面视图"><PrintViewIcon /></ViewButton>
          <ViewButton aria-label="阅读版式"><ReadViewIcon /></ViewButton>
          <ViewButton aria-label="Web 版式"><WebViewIcon /></ViewButton>
          <ViewButton aria-label="大纲视图"><OutlineViewIcon /></ViewButton>
          <ViewButton aria-label="草稿"><DraftViewIcon /></ViewButton>
        </Views>
        <ZoomLevel>100%</ZoomLevel>
        <IconButton aria-label="缩小"><ZoomSignIcon /></IconButton>
        <ZoomRange type="range" min={0} max={200} defaultValue={100} aria-label="显示比例" />
        <IconButton aria-label="放大"><ZoomSignIcon plus /></IconButton>
        <GripCorner><SizeGripIcon /></GripCorner>
      </StatusBar>
    </Window>
  );
}
